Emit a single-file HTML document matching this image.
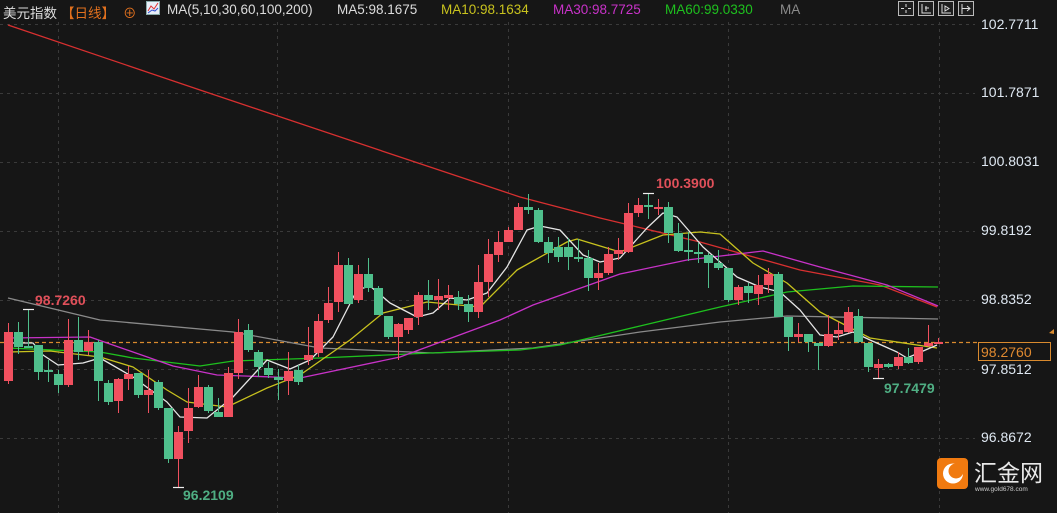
<!DOCTYPE html>
<html><head><meta charset="utf-8"><style>
html,body{margin:0;padding:0;background:#161616;width:1057px;height:513px;overflow:hidden}
svg{position:absolute;left:0;top:0}
.t{font-family:"Liberation Sans","Noto Sans CJK SC",sans-serif}
.hd{position:absolute;top:2px;left:3px;font-size:13.5px;white-space:nowrap;color:#dcdcdc}
.hd span{position:absolute;top:0}
.pl{position:absolute;left:981px;font-size:14px;color:#dfe8f2}
</style></head><body>
<svg width="1057" height="513" viewBox="0 0 1057 513">
<g stroke="#3a3a3a" stroke-dasharray="3,4" stroke-width="1">
<line x1="0" y1="24.5" x2="975" y2="24.5"/><line x1="0" y1="93.5" x2="975" y2="93.5"/><line x1="0" y1="162.5" x2="975" y2="162.5"/><line x1="0" y1="231.5" x2="975" y2="231.5"/><line x1="0" y1="300.5" x2="975" y2="300.5"/><line x1="0" y1="369.5" x2="975" y2="369.5"/><line x1="0" y1="438.5" x2="975" y2="438.5"/>
<line x1="58.5" y1="22" x2="58.5" y2="513"/><line x1="277.5" y1="22" x2="277.5" y2="513"/><line x1="508.5" y1="22" x2="508.5" y2="513"/><line x1="728.5" y1="22" x2="728.5" y2="513"/><line x1="939.5" y1="22" x2="939.5" y2="513"/>
</g>
<line x1="0" y1="342.5" x2="978" y2="342.5" stroke="#d98a2e" stroke-dasharray="4,3" stroke-width="1.3"/>
<g fill="none" stroke-width="1.3" stroke-linejoin="round">
<polyline stroke="#d83030" points="8,25 200,90 400,157 520,197 600,218 700,242 800,270 880,285 937,307"/>
<polyline stroke="#8a8a8a" points="8,298 100,320 233,332 320,348 433,353 533,348 640,332 720,322 787,316 938,319"/>
<polyline stroke="#1ec01e" points="8,348 100,352 133,358 200,366 233,361 320,358 430,353 520,350 560,345 640,326 720,307 787,292 853,286 938,287"/>
<polyline stroke="#c832c8" points="8,338 90,337 133,352 173,366 217,375 300,378 400,357 500,320 533,305 620,274 687,260 763,251 820,267 887,285 938,306"/>
<polyline stroke="#c8c21e" points="8,352 50,351 100,357 133,367 167,390 187,402 227,407 267,388 300,375 350,340 383,313 427,302 480,307 517,270 567,242 577,239 620,252 663,235 700,232 720,234 753,263 787,283 820,312 870,338 937,348"/>
<polyline stroke="#e6e6e6" points="8,343 33,343 43,355 58,365 83,363 100,358 133,377 167,402 180,417 207,418 233,397 267,360 290,369 310,360 333,337 357,290 370,286 390,303 417,317 433,313 450,298 467,300 487,293 507,267 527,230 540,226 560,230 583,255 600,262 620,258 647,228 663,213 677,217 703,247 737,277 760,287 780,292 800,310 820,335 837,337 853,332 870,340 897,352 907,358 937,345"/>
</g>
<path stroke="#f0505f" stroke-width="1" fill="none" d="M8.5 323V384M68.5 319V387M88.5 330V355M118.5 378V413M128.5 366V390M148.5 370V413M178.5 426V487M188.5 388V443M198.5 375V408M228.5 367V417M238.5 319V379M288.5 352V395M308.5 327V365M318.5 314V357M328.5 287V323M338.5 252V312M358.5 265V303M398.5 323V360M408.5 318V334M418.5 292V325M438.5 279V310M448.5 285V310M478.5 265V318M488.5 239V297M498.5 231V262M508.5 227V242M518.5 203V230M598.5 263V290M608.5 247V275M618.5 238V260M628.5 203V253M638.5 198V217M658.5 199V215M738.5 285V305M758.5 275V305M768.5 268V293M798.5 323V342M828.5 315V347M838.5 322V340M848.5 307V333M878.5 359V378M898.5 352V369M918.5 347V364M928.5 325V347M938.5 338V344"/>
<path stroke="#4fbf8c" stroke-width="1" fill="none" d="M18.5 322V354M28.5 309V347M38.5 345V380M48.5 360V382M58.5 370V393M78.5 317V360M98.5 340V401M108.5 380V405M138.5 373V398M158.5 380V410M168.5 408V463M208.5 385V413M218.5 398V417M248.5 324V352M258.5 350V377M268.5 362V378M278.5 369V400M298.5 365V385M348.5 258V304M368.5 258V292M378.5 286V315M388.5 316V339M428.5 280V310M458.5 291V310M468.5 295V322M528.5 194V214M538.5 208V243M548.5 237V263M558.5 237V262M568.5 238V270M578.5 239V262M588.5 250V291M648.5 193V219M668.5 202V243M678.5 223V252M688.5 232V261M698.5 243V263M708.5 253V288M718.5 250V270M728.5 268V302M748.5 283V303M778.5 272V317M788.5 317V351M808.5 334V352M818.5 343V370M858.5 309V343M868.5 343V372M888.5 363V368M908.5 348V364"/>
<g fill="#f0505f">
<rect x="4" y="332" width="9" height="49"/><rect x="64" y="340" width="9" height="45"/><rect x="84" y="342" width="9" height="9"/><rect x="114" y="379" width="9" height="22"/><rect x="124" y="374" width="9" height="5"/><rect x="144" y="390" width="9" height="5"/><rect x="174" y="432" width="9" height="27"/><rect x="184" y="408" width="9" height="23"/><rect x="194" y="387" width="9" height="20"/><rect x="224" y="373" width="9" height="44"/><rect x="234" y="332" width="9" height="41"/><rect x="284" y="371" width="9" height="10"/><rect x="304" y="355" width="9" height="5"/><rect x="314" y="321" width="9" height="32"/><rect x="324" y="303" width="9" height="17"/><rect x="334" y="265" width="9" height="37"/><rect x="354" y="274" width="9" height="26"/><rect x="394" y="324" width="9" height="13"/><rect x="404" y="318" width="9" height="12"/><rect x="414" y="295" width="9" height="22"/><rect x="434" y="296" width="9" height="4"/><rect x="444" y="295" width="9" height="3"/><rect x="474" y="282" width="9" height="30"/><rect x="484" y="254" width="9" height="28"/><rect x="494" y="242" width="9" height="13"/><rect x="504" y="230" width="9" height="12"/><rect x="514" y="207" width="9" height="23"/><rect x="594" y="273" width="9" height="5"/><rect x="604" y="254" width="9" height="19"/><rect x="614" y="250" width="9" height="4"/><rect x="624" y="213" width="9" height="39"/><rect x="634" y="205" width="9" height="8"/><rect x="654" y="207" width="9" height="2"/><rect x="734" y="287" width="9" height="13"/><rect x="754" y="285" width="9" height="9"/><rect x="764" y="274" width="9" height="11"/><rect x="794" y="334" width="9" height="3"/><rect x="824" y="334" width="9" height="12"/><rect x="834" y="330" width="9" height="4"/><rect x="844" y="312" width="9" height="20"/><rect x="874" y="364" width="9" height="4"/><rect x="894" y="357" width="9" height="9"/><rect x="914" y="347" width="9" height="15"/><rect x="924" y="343" width="9" height="3"/><rect x="934" y="342" width="9" height="2"/>
</g>
<g fill="#4fbf8c">
<rect x="14" y="332" width="9" height="15"/><rect x="24" y="346" width="9" height="2"/><rect x="34" y="345" width="9" height="27"/><rect x="44" y="370" width="9" height="2"/><rect x="54" y="374" width="9" height="11"/><rect x="74" y="340" width="9" height="12"/><rect x="94" y="342" width="9" height="39"/><rect x="104" y="383" width="9" height="19"/><rect x="134" y="373" width="9" height="22"/><rect x="154" y="382" width="9" height="26"/><rect x="164" y="408" width="9" height="51"/><rect x="204" y="387" width="9" height="24"/><rect x="214" y="412" width="9" height="5"/><rect x="244" y="330" width="9" height="20"/><rect x="254" y="352" width="9" height="15"/><rect x="264" y="368" width="9" height="7"/><rect x="274" y="377" width="9" height="3"/><rect x="294" y="370" width="9" height="12"/><rect x="344" y="265" width="9" height="39"/><rect x="364" y="274" width="9" height="14"/><rect x="374" y="288" width="9" height="27"/><rect x="384" y="316" width="9" height="21"/><rect x="424" y="295" width="9" height="5"/><rect x="454" y="297" width="9" height="7"/><rect x="464" y="304" width="9" height="8"/><rect x="524" y="207" width="9" height="3"/><rect x="534" y="210" width="9" height="32"/><rect x="544" y="242" width="9" height="11"/><rect x="554" y="247" width="9" height="10"/><rect x="564" y="247" width="9" height="10"/><rect x="574" y="257" width="9" height="2"/><rect x="584" y="258" width="9" height="20"/><rect x="644" y="205" width="9" height="2"/><rect x="664" y="207" width="9" height="26"/><rect x="674" y="233" width="9" height="18"/><rect x="684" y="250" width="9" height="2"/><rect x="694" y="252" width="9" height="2"/><rect x="704" y="255" width="9" height="8"/><rect x="714" y="263" width="9" height="5"/><rect x="724" y="268" width="9" height="32"/><rect x="744" y="286" width="9" height="7"/><rect x="774" y="274" width="9" height="43"/><rect x="784" y="317" width="9" height="20"/><rect x="804" y="334" width="9" height="8"/><rect x="814" y="343" width="9" height="3"/><rect x="854" y="316" width="9" height="26"/><rect x="864" y="343" width="9" height="24"/><rect x="884" y="364" width="9" height="3"/><rect x="904" y="357" width="9" height="6"/>
</g>
<g stroke="#eee" stroke-width="1.2"><line x1="23" y1="309.5" x2="34" y2="309.5"/><line x1="173" y1="487.5" x2="184" y2="487.5"/><line x1="643" y1="193.5" x2="654" y2="193.5"/><line x1="873" y1="378.5" x2="884" y2="378.5"/></g>
<g class="t" font-size="14" font-weight="bold">
<text x="35" y="305" fill="#e0505a">98.7260</text>
<text x="183" y="500" fill="#4fae83">96.2109</text>
<text x="656" y="188" fill="#e0505a">100.3900</text>
<text x="884" y="393" fill="#4fae83">97.7479</text>
</g>
<rect x="978.5" y="342.5" width="72" height="18" fill="#161616" stroke="#d98a2e"/>
<text x="981" y="357" class="t" font-size="14" fill="#e08a30">98.2760</text>
<path d="M1049 333l5 -4v5z" fill="#d98a2e"/>
<g stroke="#bbb" fill="#1e1e1e" stroke-width="1">
<rect x="898.5" y="1.5" width="15" height="14"/><rect x="918.5" y="1.5" width="15" height="14"/><rect x="938.5" y="1.5" width="15" height="14"/><rect x="958.5" y="1.5" width="15" height="14"/>
</g>
<g stroke="#ddd" stroke-width="1" fill="none">
<path d="M906 4v3M906 10v3M901 8.5h3M908 8.5h3"/>
<path d="M922 4v9h9M925 8h4M926 6v5"/>
<path d="M942 4v9h9M945 6l4 2.5l-4 2.5z"/>
<path d="M962 4v10M962 8.5h8M967 6l3 2.5l-3 2.5"/>
</g>
<rect x="146.5" y="1.5" width="13" height="13" fill="#e8eef8" stroke="#8aa"/>
<path d="M148 11l3-5l3 3l4-6" stroke="#e03030" fill="none"/><path d="M148 13l4-3l3 1l3-3" stroke="#3050d0" fill="none"/>
<rect x="937" y="458" width="31" height="31" rx="4" fill="#f07a10"/>
<circle cx="953" cy="473.5" r="10" fill="#fff"/><circle cx="956" cy="471" r="7.5" fill="#f07a10"/>
<text x="974" y="481" class="t" font-size="23" fill="#e8e8e8">汇金网</text>
<text x="975" y="491" class="t" font-size="6.5" fill="#ccc">www.gold678.com</text>
</svg>
<div class="hd t">
<span style="left:0">美元指数</span>
<span style="left:58px;color:#e0701e">【日线】</span>
<span style="left:120px;color:#e0701e">⊕</span>
<span style="left:164px">MA(5,10,30,60,100,200)</span>
<span style="left:334px">MA5:98.1675</span>
<span style="left:438px;color:#c8c21e">MA10:98.1634</span>
<span style="left:550px;color:#c832c8">MA30:98.7725</span>
<span style="left:662px;color:#1ec01e">MA60:99.0330</span>
<span style="left:777px;color:#8a8a8a">MA</span>
</div>
<div class="pl t" style="top:16px">102.7711</div>
<div class="pl t" style="top:84px">101.7871</div>
<div class="pl t" style="top:153px">100.8031</div>
<div class="pl t" style="top:222px">99.8192</div>
<div class="pl t" style="top:291px">98.8352</div>
<div class="pl t" style="top:361px">97.8512</div>
<div class="pl t" style="top:429px">96.8672</div>
</body></html>
